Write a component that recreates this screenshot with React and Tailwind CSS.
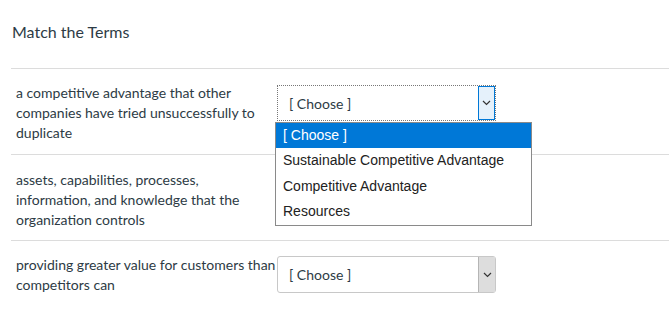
import React from 'react';

const rows = [
  {
    text: 'a competitive advantage that other companies have tried unsuccessfully to duplicate',
    open: true,
  },
  {
    text: 'assets, capabilities, processes, information, and knowledge that the organization controls',
    hidden: true,
  },
  {
    text: 'providing greater value for customers than competitors can',
  },
];

const options = ['[ Choose ]', 'Sustainable Competitive Advantage', 'Competitive Advantage', 'Resources'];

function Chevron() {
  return (
    <svg width="9" height="6" viewBox="0 0 9 6" fill="none" stroke="#333" strokeWidth="1.2">
      <path d="M1 1l3.5 3.5L8 1" />
    </svg>
  );
}

function Select({ open }) {
  if (open) {
    return (
      <div className="relative mt-[2px]">
        <div className="flex h-[36px] w-[219px] items-center border border-dotted border-[#777] bg-white">
          <span className="flex-1 pl-[11px] text-[14px] text-[#2d3b45]">[ Choose ]</span>
          <span className="flex h-full w-[17px] items-center justify-center border border-[#0078d7] bg-[#e5f1fb]">
            <Chevron />
          </span>
        </div>
        {/* open option list */}
        <div className="absolute left-[-2px] top-[37px] z-10 w-[257px] border border-[#8a8a8a] bg-white font-['Liberation_Sans',Arial,sans-serif] text-[14px]">
          {options.map((o, i) => (
            <div
              key={o}
              className={
                i === 0
                  ? 'flex h-[25px] items-center bg-[#0078d7] pl-[7px] text-white'
                  : 'flex h-[25.5px] items-center pl-[7px] text-[#222]'
              }
            >
              {o}
            </div>
          ))}
        </div>
      </div>
    );
  }
  return (
    <div className="mt-[1px] flex h-[37px] w-[219px] items-center rounded-[3px] border border-[#c8c8c8] bg-white">
      <span className="flex-1 pl-[11px] text-[14px] text-[#2d3b45]">[ Choose ]</span>
      <span className="flex h-full w-[17px] items-center justify-center border-l border-[#b5b5b5] bg-[#dddddd]">
        <Chevron />
      </span>
    </div>
  );
}

export default function App() {
  return (
    <div className="h-[316px] w-[669px] overflow-hidden bg-white pl-[11px] font-['Lato',sans-serif] text-[#2d3b45]">
      <div className="pl-[1px] pt-[21px] pb-[25px] text-[16px] leading-[22px]">Match the Terms</div>
      {rows.map((r, i) => (
        <div
          key={i}
          className={
            'flex items-start border-t border-[#dcdcdc] pl-[5px] ' +
            (i === 1 ? 'pt-[15px] pb-[10px]' : 'pt-[14px] pb-[11px]')
          }
        >
          <div className={(r.hidden ? 'w-[250px] mr-[11px]' : 'w-[261px]') + ' shrink-0 text-[14px] leading-[20px]'}>
            {r.text}
          </div>
          {!r.hidden && <Select open={r.open} />}
        </div>
      ))}
    </div>
  );
}
